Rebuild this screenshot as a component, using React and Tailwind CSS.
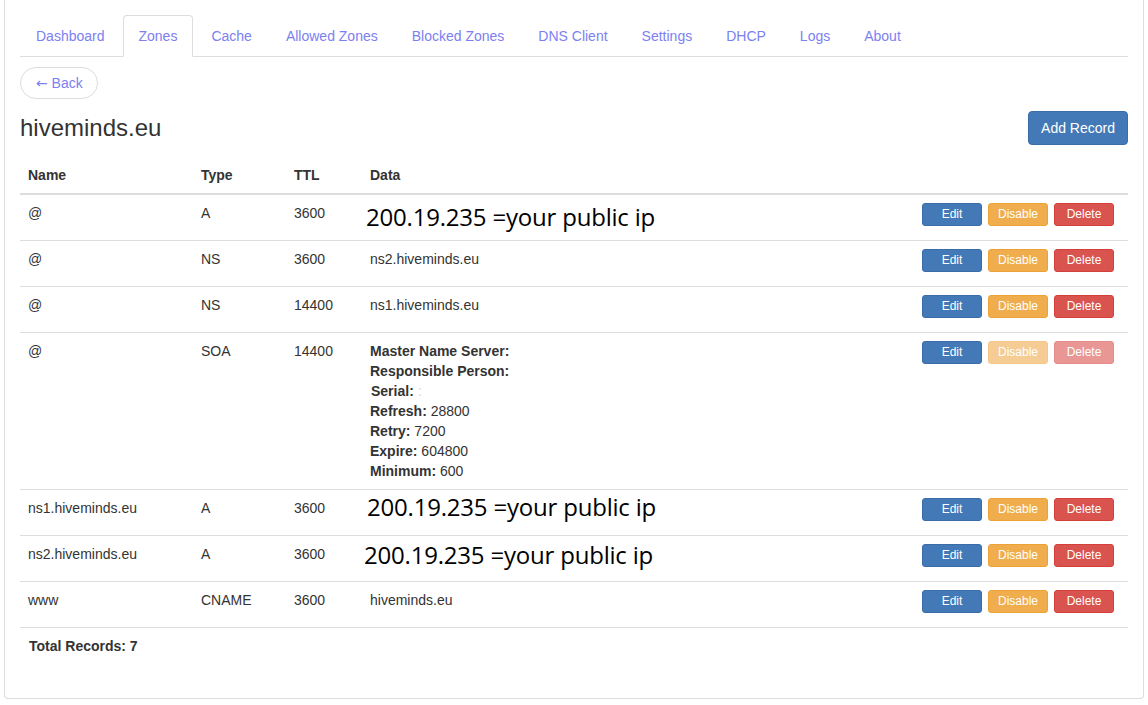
const tabs = ["Dashboard", "Zones", "Cache", "Allowed Zones", "Blocked Zones", "DNS Client", "Settings", "DHCP", "Logs", "About"];

const records = [
    { name: "@", type: "A", ttl: "3600", ip: true, shift: "mt-[2px] -ml-[4px]" },
    { name: "@", type: "NS", ttl: "3600", data: "ns2.hiveminds.eu" },
    { name: "@", type: "NS", ttl: "14400", data: "ns1.hiveminds.eu" },
    { name: "@", type: "SOA", ttl: "14400", soa: true },
    { name: "ns1.hiveminds.eu", type: "A", ttl: "3600", ip: true, shift: "-mt-[3px] -ml-[3px]" },
    { name: "ns2.hiveminds.eu", type: "A", ttl: "3600", ip: true, shift: "-mt-[1px] -ml-[6px]" },
    { name: "www", type: "CNAME", ttl: "3600", data: "hiveminds.eu" },
];

const cols = "grid grid-cols-[173px_93px_76px_1fr_auto]";

const SoaData = () => (
    <div>
        <div><b>Master Name Server:</b></div>
        <div><b>Responsible Person:</b></div>
        <div className="pl-px"><b>Serial:</b> <span className="text-gray-300">:</span></div>
        <div><b>Refresh:</b> 28800</div>
        <div><b>Retry:</b> 7200</div>
        <div><b>Expire:</b> 604800</div>
        <div><b>Minimum:</b> 600</div>
    </div>
);

const RowButtons = ({ locked }) => (
    <div className="flex gap-[6px] pr-[14px] text-[12px] leading-[21px] text-white">
        <button className="w-[60px] rounded-[3px] border border-[#3a6da8] bg-[#4379b6]">Edit</button>
        <button className={`w-[60px] rounded-[3px] border border-[#eea236] bg-[#f0ad4e] ${locked ? "opacity-60" : ""}`}>Disable</button>
        <button className={`w-[60px] rounded-[3px] border border-[#d43f3a] bg-[#d9534f] ${locked ? "opacity-60" : ""}`}>Delete</button>
    </div>
);

export default function App() {
    return (
        <div className="min-h-screen bg-white text-[14px] leading-5 text-[#333]" style={{ fontFamily: "'Liberation Sans', Arial, sans-serif" }}>
            <div className="ml-[4px] w-[1140px] rounded-b-[4px] border-x border-b border-[#ddd] px-[15px] pt-[15px] pb-[42px]">
                {/* Tabs */}
                <div className="flex border-b border-[#ddd]">
                    {tabs.map((tab) => (
                        <div
                            key={tab}
                            className={`-mb-px mr-[2px] rounded-t-[4px] border px-[15px] py-[10px] text-[#7c80f2] ${tab === "Zones" ? "border-[#ddd] border-b-white bg-white" : "border-transparent"}`}
                        >
                            {tab}
                        </div>
                    ))}
                </div>

                <button className="mt-[10px] h-[32px] rounded-full border border-[#ddd] pl-[15px] pr-[14px] text-[#7c80f2]">
                    <span style={{ fontFamily: "'DejaVu Sans', sans-serif" }}>←</span> Back
                </button>

                <div className="mt-[12px] flex items-center justify-between">
                    <h2 className="text-[24px] leading-[26px]">hiveminds.eu</h2>
                    <button className="h-[34px] rounded-[4px] border border-[#3a6da8] bg-[#4379b6] px-[12px] text-white">
                        Add Record
                    </button>
                </div>

                {/* Records */}
                <div className="mt-[12px]">
                    <div className={`${cols} border-b-2 border-[#ddd] font-bold`}>
                        <div className="p-2">Name</div>
                        <div className="p-2">Type</div>
                        <div className="p-2">TTL</div>
                        <div className="p-2">Data</div>
                        <div />
                    </div>
                    {records.map((r, i) => (
                        <div key={i} className={`${cols} min-h-[46px] border-b border-[#ddd]`}>
                            <div className="p-2">{r.name}</div>
                            <div className="p-2">{r.type}</div>
                            <div className="p-2">{r.ttl}</div>
                            <div className="p-2">
                                {r.ip && (
                                    <div className={`${r.shift} text-[24px] leading-6 tracking-[-0.2px] text-black`} style={{ fontFamily: "'Open Sans', sans-serif" }}>
                                        200.19.235 =your public ip
                                    </div>
                                )}
                                {r.data}
                                {r.soa && <SoaData />}
                            </div>
                            <div className="pt-2">
                                <RowButtons locked={r.soa} />
                            </div>
                        </div>
                    ))}
                </div>

                <div className="mt-[8px] pl-[9px] font-bold">Total Records: 7</div>
            </div>
        </div>
    );
}
